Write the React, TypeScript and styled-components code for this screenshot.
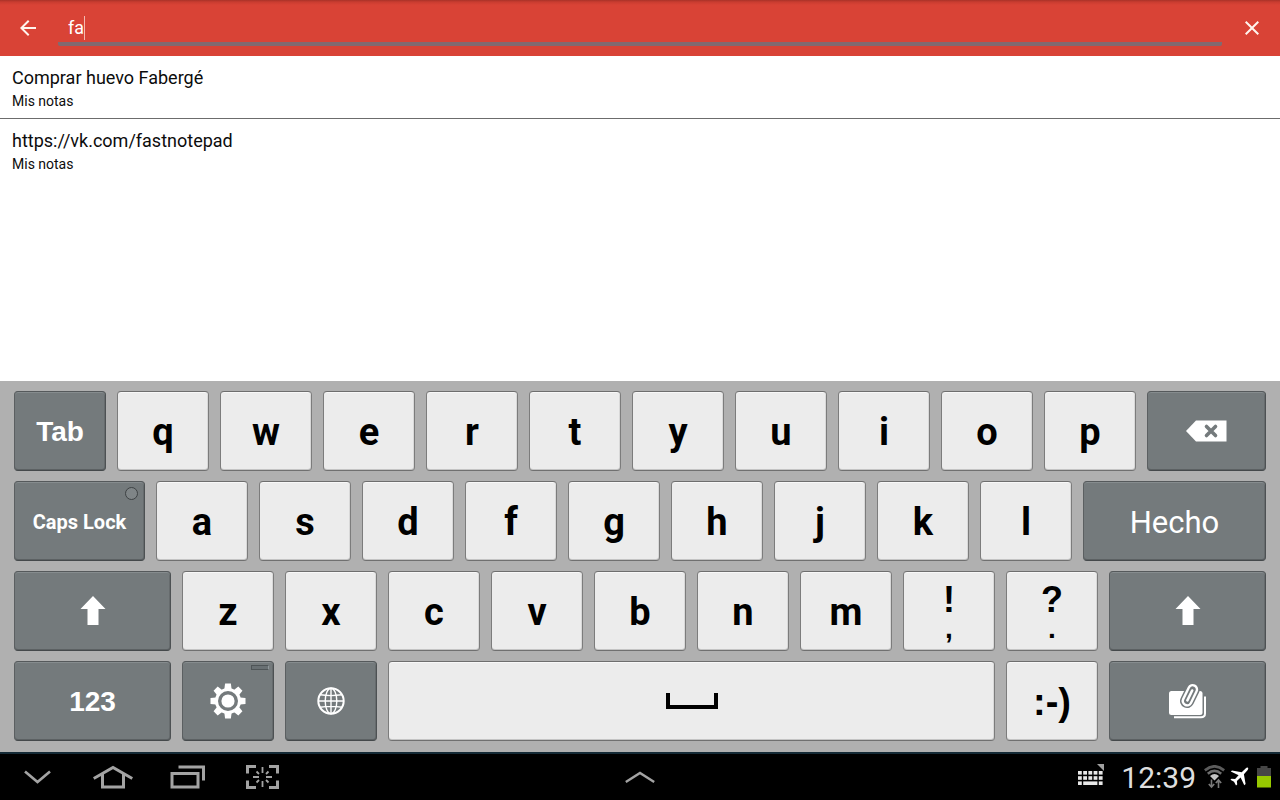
import React, { useState } from "react";
import styled, { createGlobalStyle, css } from "styled-components";

const GlobalStyle = createGlobalStyle`
  *, *::before, *::after { box-sizing: border-box; }
  body { margin: 0; background: #fff; font-family: Roboto, "Liberation Sans", sans-serif; }
  button { font: inherit; color: inherit; border: 0; padding: 0; margin: 0; background: none; cursor: pointer; }
  svg { display: block; flex: none; }
`;

const Screen = styled.div`
  display: flex;
  flex-direction: column;
  min-height: 100vh;
`;

/* Search bar */

const SearchBar = styled.header`
  display: flex;
  align-items: center;
  gap: 18px;
  height: 56px;
  padding: 0 16px;
  color: #fff5ee;
  background: linear-gradient(#a83228 0, #c93c30 2px, #d94336 5px, #d94336 100%);
`;

const BarButton = styled.button`
  display: flex;
  width: 24px;
  height: 24px;
`;

const SearchField = styled.label`
  display: flex;
  flex: 1;
  align-items: center;
  align-self: stretch;
  margin-bottom: 10px;
  padding: 14px 10px 0;
  border-bottom: 4px solid #82696f;
  border-radius: 0 0 2px 2px;
  cursor: text;
`;

const SearchInput = styled.input`
  field-sizing: content;
  min-width: 1px;
  height: 24px;
  padding: 0;
  border: 0;
  outline: 0;
  background: none;
  color: #fff;
  caret-color: transparent;
  font: 18px/24px Roboto, "Liberation Sans", sans-serif;
`;

const Caret = styled.span`
  width: 1px;
  height: 24px;
  background: #f3b9b0;
`;

/* Results */

const Results = styled.ul`
  flex: 1;
  margin: 0;
  padding: 0;
  list-style: none;
  background: #fff;
`;

const Result = styled.li`
  padding: 10px 12px 6px;
  color: #0c0c0c;

  & + & {
    border-top: 1px solid #6c6c6c;
  }
`;

const ResultTitle = styled.div`
  font-size: 18px;
  line-height: 24px;
`;

const ResultFolder = styled.div`
  font-size: 14px;
  line-height: 22px;
`;

/* Keyboard */

const Keyboard = styled.section`
  display: flex;
  flex-direction: column;
  gap: 10px;
  padding: 10px 14px 11px;
  background: #b0b0b0;
`;

const KeyRow = styled.div`
  display: flex;
  gap: 11px;
`;

const darkKey = css`
  color: #fff;
  background: #747a7c;
  border-color: #55595b #4d5153 #45494b #5b5f61;
  box-shadow: inset 0 1px 0 #868c8e, inset 0 -1px 0 #5c6163, inset -1px 0 0 #666b6d;
`;

const lightKey = css`
  color: #000;
  background: #ececec;
  border-color: #6e6e6e #7c7c7c #707070 #7c7c7c;
  box-shadow: inset 0 1px 0 #f8f8f8, inset 0 -1px 0 #c4c4c4, inset -1px 0 0 #d8d8d8;
`;

const Key = styled.button<{ $span?: number; $dark?: boolean }>`
  position: relative;
  display: flex;
  flex-direction: column;
  align-items: center;
  justify-content: center;
  flex: ${({ $span = 92 }) => `${$span} ${$span} ${$span}px`};
  min-width: 0;
  height: 80px;
  border: 1px solid;
  border-radius: 4px;
  ${(p) => (p.$dark ? darkKey : lightKey)}
`;

const Letter = styled.span`
  padding-top: 2px;
  font-size: 38px;
  font-weight: 700;
  line-height: 44px;
`;

const Mark = styled.span`
  font-family: "Liberation Sans", sans-serif;
  font-size: 36px;
  font-weight: 700;
  line-height: 36px;
`;

const SmallMark = styled.span`
  font-family: "Liberation Sans", sans-serif;
  font-size: 28px;
  font-weight: 700;
  line-height: 22px;
`;

const Smiley = styled.span`
  padding-top: 2px;
  font-family: "Liberation Sans", sans-serif;
  font-size: 38px;
  font-weight: 700;
  line-height: 44px;
`;

const HelveticaLabel = styled.span`
  padding-top: 2px;
  font-family: "Liberation Sans", sans-serif;
  font-size: 28px;
  font-weight: 700;
  line-height: 32px;
`;

const CapsLabel = styled.span`
  padding-top: 2px;
  font-size: 20px;
  font-weight: 700;
  line-height: 24px;
  white-space: nowrap;
`;

const DoneLabel = styled.span`
  padding-top: 4px;
  font-size: 31px;
  line-height: 36px;
`;

const Lamp = styled.span`
  position: absolute;
  top: 5px;
  right: 6px;
  width: 13px;
  height: 13px;
  border: 1px solid #3e4244;
  border-radius: 50%;
  background: #7f8587;
`;

const HoldMark = styled.span`
  position: absolute;
  top: 3px;
  right: 4px;
  width: 18px;
  height: 5px;
  border: 1px solid #4f5557;
  border-right-color: #8f989b;
  background: #697073;
`;

/* System bar */

const SystemBar = styled.footer`
  display: grid;
  grid-template-columns: 1fr auto 1fr;
  align-items: center;
  height: 48px;
  border-top: 2px solid #142a36;
  background: #000;
  color: #a3a3a3;
`;

const NavButtons = styled.nav`
  display: flex;
`;

const NavButton = styled.button`
  display: flex;
  align-items: center;
  justify-content: center;
  width: 75px;
  height: 46px;
`;

const Status = styled.div`
  display: flex;
  align-items: center;
  justify-content: flex-end;
  padding-right: 9px;
`;

const Clock = styled.time`
  margin: 0 8px 0 16px;
  padding-top: 2px;
  color: #dedede;
  font-size: 30px;
  line-height: 36px;
`;

const StatusIcons = styled.div`
  display: flex;
  align-items: center;
  gap: 5px;
`;

/* Icons */

const BackIcon = () => (
  <svg width="24" height="24" viewBox="0 0 24 24" fill="currentColor">
    <path d="M20 11H7.83l5.59-5.59L12 4l-8 8 8 8 1.41-1.41L7.83 13H20v-2z" />
  </svg>
);

const CloseIcon = () => (
  <svg width="24" height="24" viewBox="0 0 24 24" fill="currentColor">
    <path d="M19 6.41L17.59 5 12 10.59 6.41 5 5 6.41 10.59 12 5 17.59 6.41 19 12 13.41 17.59 19 19 17.59 13.41 12z" />
  </svg>
);

const BackspaceIcon = () => (
  <svg width="41" height="22" viewBox="0 0 41 22">
    <path d="M0 11L10 .5H40.500V21.500H10Z" fill="#fff" />
    <path d="M20.500 6.500l9 9M29.500 6.500l-9 9" stroke="#747a7c" strokeWidth="3.600" strokeLinecap="round" />
  </svg>
);

const ShiftIcon = () => (
  <svg width="26" height="30" viewBox="0 0 26 30">
    <path d="M13 0L25.500 13H18.500V29H7.500V13H.5Z" fill="#fff" />
  </svg>
);

const GearIcon = () => (
  <svg width="36" height="36" viewBox="-18 -18 36 36">
    {[0, 45, 90, 135].map((a) => (
      <path key={a} d="M-3.600 -12L-2.900 -17.500H2.900L3.600 -12V12L2.900 17.500H-2.900L-3.600 12Z" fill="#fff" transform={`rotate(${a})`} />
    ))}
    <circle r="13" fill="#fff" />
    <circle r="8.300" fill="none" stroke="#747a7c" strokeWidth="3.400" />
  </svg>
);

const GlobeIcon = () => (
  <svg width="28" height="28" viewBox="-14 -14 28 28" fill="none" stroke="#fff">
    <circle r="12.700" strokeWidth="2" />
    <ellipse rx="5.800" ry="12.700" strokeWidth="1.400" />
    <path d="M0 -13V13M-13 0H13M-11 -6.200Q0 -4.600 11 -6.200M-11 6.200Q0 4.600 11 6.200" strokeWidth="1.400" />
  </svg>
);

const SpaceIcon = () => (
  <svg width="52" height="16" viewBox="0 0 52 16">
    <path d="M2 0V14H50V0" fill="none" stroke="#000" strokeWidth="4" />
  </svg>
);

const ClipIcon = () => (
  <svg width="38" height="37" viewBox="0 0 38 37">
    <path d="M5 34.300H32Q36 34.300 36 30.500V13.500" fill="none" stroke="#fff" strokeWidth="2" />
    <rect x="0" y="8" width="33.500" height="24" rx="2.500" fill="#fff" />
    <g fill="none" strokeLinecap="round" transform="translate(21 12) rotate(26)">
      <rect x="-4.300" y="-10.500" width="8.600" height="21.500" rx="4.300" fill="#fff" stroke="#747a7c" strokeWidth="5.500" />
      <rect x="-4.300" y="-10.500" width="8.600" height="21.500" rx="4.300" fill="#747a7c" stroke="#fff" strokeWidth="2.400" />
      <path d="M0 -5V6" stroke="#fff" strokeWidth="2.600" />
    </g>
  </svg>
);

const HideIcon = () => (
  <svg width="27" height="14" viewBox="0 0 27 14" fill="none" stroke="currentColor" strokeWidth="2.600">
    <path d="M1 1.500L13.500 12L26 1.500" />
  </svg>
);

const HomeIcon = () => (
  <svg width="40" height="24" viewBox="0 0 40 24" fill="none" stroke="currentColor" strokeWidth="3">
    <path d="M.7 13.500L20 2.500L39.300 13.500M9.500 9V22H30.500V9" />
  </svg>
);

const RecentsIcon = () => (
  <svg width="36" height="24" viewBox="0 0 36 24" fill="none" stroke="currentColor" strokeWidth="3">
    <path d="M8.500 2H33.500V15.500M2 8.500H28V22H2Z" />
  </svg>
);

const CaptureIcon = () => (
  <svg width="33" height="24" viewBox="0 0 33 24" fill="none" stroke="currentColor">
    <path d="M10 1.500H1.500V8.500M23 1.500H31.500V8.500M1.500 15.500V22.500H10M31.500 15.500V22.500H23" strokeWidth="3" />
    <path d="M16.500 2V8M16.500 16V22M7 12H13M20 12H26M10.500 6.500L13 9M22.500 6.500L20 9M10.500 17.500L13 15M22.500 17.500L20 15" strokeWidth="1.800" />
  </svg>
);

const ExpandIcon = () => (
  <svg width="30" height="12" viewBox="0 0 30 12" fill="none" stroke="currentColor" strokeWidth="2.400">
    <path d="M.8 11L15 2L29.200 11" />
  </svg>
);

const KeyboardIcon = () => (
  <svg width="27" height="27" viewBox="0 0 27 27">
    <path d="M19 0H26V7Z" fill="#a0a0a0" />
    <g fill="#e8e8e8">
      {[0, 1, 2].map((r) =>
        [0, 1, 2, 3, 4].map((c) =>
          r === 2 && c > 0 && c < 4 ? null : (
            <rect key={`${r}${c}`} x={c * 5.2} y={7 + r * 5.2} width="3.800" height="3.600" />
          ),
        ),
      )}
      <rect x="5.200" y="17.400" width="14.200" height="3.600" />
    </g>
  </svg>
);

const WifiIcon = () => (
  <svg width="21" height="24" viewBox="0 0 21 24" fill="none">
    <path d="M.8 5.300Q10.500 -2.500 20.200 5.300" stroke="#5c5c5c" strokeWidth="2.800" />
    <path d="M3.800 8.700Q10.500 3 17.200 8.700" stroke="#6e6e6e" strokeWidth="2.600" />
    <path d="M6 11Q10.500 7 15 11L10.500 15.500Z" fill="#c4c4c4" />
    <path d="M7.500 14.500V21.500M4.800 19L7.500 22L10.200 19M14.500 23V15.500M11.800 18L14.500 15L17.200 18" stroke="#7a7a7a" strokeWidth="1.600" />
  </svg>
);

const PlaneIcon = () => (
  <svg width="22" height="20" viewBox="0 0 22 20" fill="#fff">
    <path d="M18 .8Q17 .2 15.600 1.500L11.700 5.200L2 3.400L.8 4.600L8.600 8.300L5.100 12.100L1.500 11.700L.4 12.800L4 14.800L6 18.600L7.200 17.500L6.900 13.900L10.600 10.500L14.300 18.300L15.600 17.100L13.900 7.300L17.500 3.300Q18.800 1.700 18 .8Z" />
  </svg>
);

const BatteryIcon = () => (
  <svg width="14" height="22" viewBox="0 0 14 22">
    <path d="M0 2H3.500V0H10.500V2H14V10H0Z" fill="#464646" />
    <rect y="10" width="14" height="11.500" fill="#97c900" />
  </svg>
);

const LetterKeys = ({ letters }: { letters: string }) => (
  <>
    {letters.split("").map((l) => (
      <Key key={l} type="button">
        <Letter>{l}</Letter>
      </Key>
    ))}
  </>
);

const notes = [
  { title: "Comprar huevo Fabergé", folder: "Mis notas" },
  { title: "https://vk.com/fastnotepad", folder: "Mis notas" },
];

export default function App() {
  const [query, setQuery] = useState("fa");

  return (
    <Screen>
      <GlobalStyle />
      <SearchBar>
        <BarButton type="button" aria-label="Atrás">
          <BackIcon />
        </BarButton>
        <SearchField>
          <SearchInput aria-label="Buscar" value={query} onChange={(e) => setQuery(e.target.value)} />
          <Caret />
        </SearchField>
        <BarButton type="button" aria-label="Borrar" onClick={() => setQuery("")}>
          <CloseIcon />
        </BarButton>
      </SearchBar>

      <Results>
        {notes.map((n) => (
          <Result key={n.title}>
            <ResultTitle>{n.title}</ResultTitle>
            <ResultFolder>{n.folder}</ResultFolder>
          </Result>
        ))}
      </Results>

      <Keyboard aria-label="Teclado">
        <KeyRow>
          <Key type="button" $dark>
            <HelveticaLabel>Tab</HelveticaLabel>
          </Key>
          <LetterKeys letters="qwertyuiop" />
          <Key type="button" $dark $span={119} aria-label="Retroceso">
            <BackspaceIcon />
          </Key>
        </KeyRow>
        <KeyRow>
          <Key type="button" $dark $span={131}>
            <CapsLabel>Caps Lock</CapsLabel>
            <Lamp />
          </Key>
          <LetterKeys letters="asdfghjkl" />
          <Key type="button" $dark $span={183}>
            <DoneLabel>Hecho</DoneLabel>
          </Key>
        </KeyRow>
        <KeyRow>
          <Key type="button" $dark $span={157} aria-label="Mayúsculas">
            <ShiftIcon />
          </Key>
          <LetterKeys letters="zxcvbnm" />
          <Key type="button">
            <Mark>!</Mark>
            <SmallMark>,</SmallMark>
          </Key>
          <Key type="button">
            <Mark>?</Mark>
            <SmallMark>.</SmallMark>
          </Key>
          <Key type="button" $dark $span={157} aria-label="Mayúsculas">
            <ShiftIcon />
          </Key>
        </KeyRow>
        <KeyRow>
          <Key type="button" $dark $span={157}>
            <HelveticaLabel>123</HelveticaLabel>
          </Key>
          <Key type="button" $dark aria-label="Ajustes">
            <GearIcon />
            <HoldMark />
          </Key>
          <Key type="button" $dark aria-label="Idioma">
            <GlobeIcon />
          </Key>
          <Key type="button" $span={607} aria-label="Espacio">
            <SpaceIcon />
          </Key>
          <Key type="button">
            <Smiley>:-)</Smiley>
          </Key>
          <Key type="button" $dark $span={157} aria-label="Portapapeles">
            <ClipIcon />
          </Key>
        </KeyRow>
      </Keyboard>

      <SystemBar>
        <NavButtons>
          <NavButton type="button" aria-label="Ocultar teclado">
            <HideIcon />
          </NavButton>
          <NavButton type="button" aria-label="Inicio">
            <HomeIcon />
          </NavButton>
          <NavButton type="button" aria-label="Recientes">
            <RecentsIcon />
          </NavButton>
          <NavButton type="button" aria-label="Captura">
            <CaptureIcon />
          </NavButton>
        </NavButtons>
        <NavButton type="button" aria-label="Aplicaciones">
          <ExpandIcon />
        </NavButton>
        <Status>
          <KeyboardIcon />
          <Clock>12:39</Clock>
          <StatusIcons>
            <WifiIcon />
            <PlaneIcon />
            <BatteryIcon />
          </StatusIcons>
        </Status>
      </SystemBar>
    </Screen>
  );
}
